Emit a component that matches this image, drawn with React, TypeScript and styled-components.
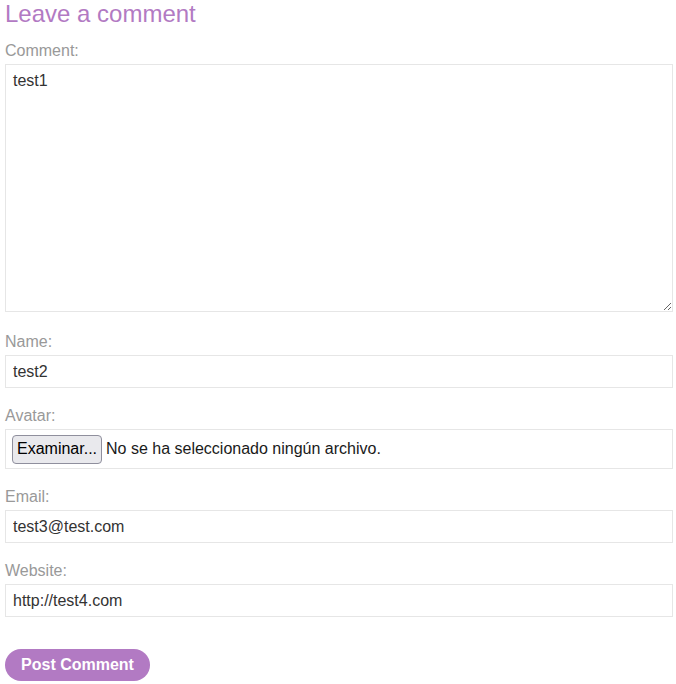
import React from 'react';
import styled, { createGlobalStyle } from 'styled-components';

const GlobalStyle = createGlobalStyle`
  html, body {
    margin: 0;
    padding: 0;
    background: #fff;
  }
  body {
    font-family: "Liberation Sans", Arial, sans-serif;
  }
`;

const Section = styled.section`
  padding: 0 3px 0 5px;
  width: 668px;
`;

const Heading = styled.h1`
  margin: 0 0 14px;
  font-size: 24px;
  font-weight: normal;
  line-height: 28px;
  color: #b27ac3;
`;

const Form = styled.form`
  display: flex;
  flex-direction: column;
`;

const Label = styled.label`
  display: block;
  font-size: 16px;
  line-height: 18px;
  color: #999;
  margin-bottom: 4px;
`;

const Field = styled.div<{ $gap?: number }>`
  margin-bottom: ${(p) => p.$gap ?? 19}px;
`;

const TextArea = styled.textarea`
  display: block;
  box-sizing: border-box;
  width: 100%;
  height: 248px;
  margin: 0;
  padding: 7px 7px;
  border: 1px solid #e6e6e6;
  font-family: "Liberation Sans", Arial, sans-serif;
  font-size: 16px;
  line-height: 18px;
  color: #333;
  resize: vertical;
  outline: none;
`;

const Input = styled.input`
  display: block;
  box-sizing: border-box;
  width: 100%;
  height: 33px;
  margin: 0;
  padding: 0 7px;
  border: 1px solid #e6e6e6;
  font-family: "Liberation Sans", Arial, sans-serif;
  font-size: 16px;
  color: #333;
  outline: none;
`;

const FileBox = styled.div`
  box-sizing: border-box;
  height: 40px;
  display: flex;
  align-items: center;
  gap: 4px;
  padding: 0 6px;
  border: 1px solid #e6e6e6;
  font-size: 16px;
  color: #1a1a1a;
`;

const FileButton = styled.button`
  height: 29px;
  padding: 0 4px;
  margin: 0;
  border: 1px solid #8f8f9d;
  border-radius: 4px;
  background: #e9e9ed;
  font-family: "Liberation Sans", Arial, sans-serif;
  font-size: 16px;
  color: #000;
`;

const SubmitButton = styled.button`
  align-self: flex-start;
  margin-top: 13px;
  width: 145px;
  height: 32px;
  border: none;
  border-radius: 16px;
  background: #b27ac3;
  color: #fff;
  font-family: "Liberation Sans", Arial, sans-serif;
  font-size: 16px;
  font-weight: bold;
`;

const App: React.FC = () => {
  return (
    <Section>
      <GlobalStyle />
      <Heading>Leave a comment</Heading>
      <Form onSubmit={(e) => e.preventDefault()}>
        <Field $gap={21}>
          <Label>Comment:</Label>
          <TextArea defaultValue="test1" />
        </Field>
        <Field>
          <Label>Name:</Label>
          <Input defaultValue="test2" />
        </Field>
        <Field>
          <Label>Avatar:</Label>
          <FileBox>
            <FileButton type="button">Examinar...</FileButton>
            <span>No se ha seleccionado ningún archivo.</span>
          </FileBox>
        </Field>
        <Field>
          <Label>Email:</Label>
          <Input defaultValue="test3@test.com" />
        </Field>
        <Field>
          <Label>Website:</Label>
          <Input defaultValue="http://test4.com" />
        </Field>
        <SubmitButton type="submit">Post Comment</SubmitButton>
      </Form>
    </Section>
  );
};

export default App;
